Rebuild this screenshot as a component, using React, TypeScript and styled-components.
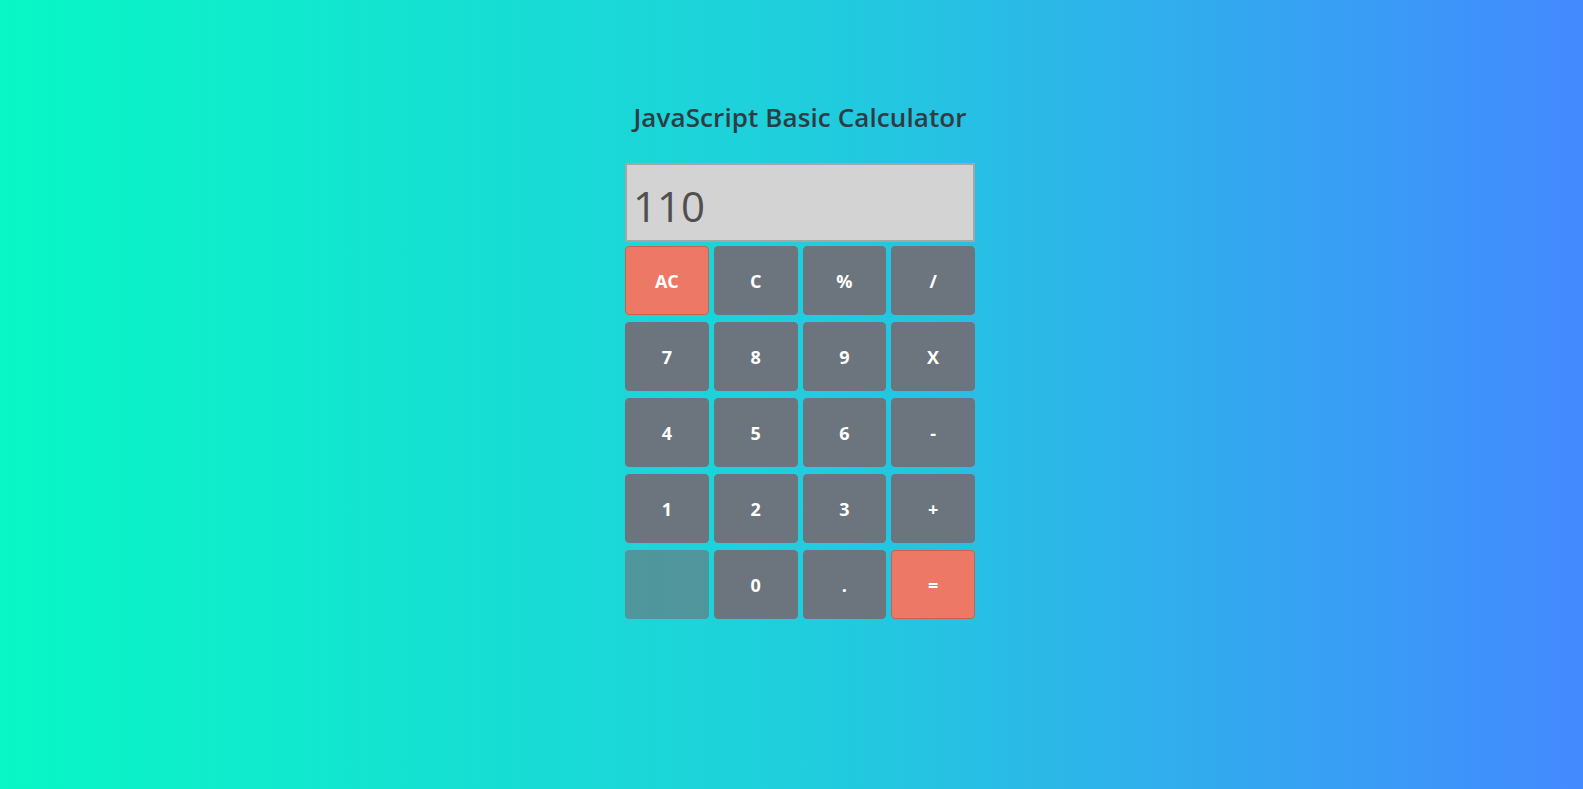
import React from "react";
import styled, { createGlobalStyle } from "styled-components";

const GlobalStyle = createGlobalStyle`
  html, body {
    margin: 0;
    padding: 0;
  }
  body {
    font-family: "Open Sans", "Noto Sans", sans-serif;
    min-height: 789px;
    background: linear-gradient(to right, #08f7c5 0%, #1fcfdc 50%, #4389ff 100%);
  }
`;

const Page = styled.div`
  min-height: 789px;
  box-sizing: border-box;
  padding: 102px 0 0 17px;
  display: flex;
  flex-direction: column;
  align-items: center;
`;

const Title = styled.h1`
  margin: 0 0 30px;
  font-size: 26px;
  line-height: 1.2;
  font-weight: 600;
  color: #303b44;
  letter-spacing: 0.1px;
`;

const Calculator = styled.div`
  width: 350px;
  display: flex;
  flex-direction: column;
  gap: 4px;
`;

const Display = styled.div`
  box-sizing: border-box;
  height: 79px;
  border: 2px solid #a6a6a6;
  background: #d3d3d3;
  color: #4f4f4f;
  font-size: 42px;
  line-height: 1;
  padding: 6px 0 0 6px;
  display: flex;
  align-items: center;
`;

const Keys = styled.div`
  display: grid;
  grid-template-columns: repeat(4, 1fr);
  column-gap: 5px;
  row-gap: 7px;
`;

const Key = styled.button<{ $variant?: "accent" | "blank" }>`
  box-sizing: border-box;
  height: 69px;
  border-radius: 4px;
  border: 1px solid
    ${(p) => (p.$variant === "accent" ? "#c9614f" : "#6c757d")};
  background: ${(p) => (p.$variant === "accent" ? "#ec7865" : "#6c757d")};
  opacity: ${(p) => (p.$variant === "blank" ? 0.65 : 1)};
  color: #ffffff;
  font-family: "Open Sans", "Noto Sans", sans-serif;
  font-weight: 700;
  font-size: 18px;
  padding: 0;
  cursor: pointer;
`;

const keys: { label: string; variant?: "accent" | "blank" }[] = [
  { label: "AC", variant: "accent" },
  { label: "C" },
  { label: "%" },
  { label: "/" },
  { label: "7" },
  { label: "8" },
  { label: "9" },
  { label: "X" },
  { label: "4" },
  { label: "5" },
  { label: "6" },
  { label: "-" },
  { label: "1" },
  { label: "2" },
  { label: "3" },
  { label: "+" },
  { label: "", variant: "blank" },
  { label: "0" },
  { label: "." },
  { label: "=", variant: "accent" },
];

export default function App() {
  return (
    <>
      <GlobalStyle />
      <Page>
        <Title>JavaScript Basic Calculator</Title>
        <Calculator>
          <Display>110</Display>
          <Keys>
            {keys.map((k, i) => (
              <Key key={i} $variant={k.variant}>
                {k.label}
              </Key>
            ))}
          </Keys>
        </Calculator>
      </Page>
    </>
  );
}
